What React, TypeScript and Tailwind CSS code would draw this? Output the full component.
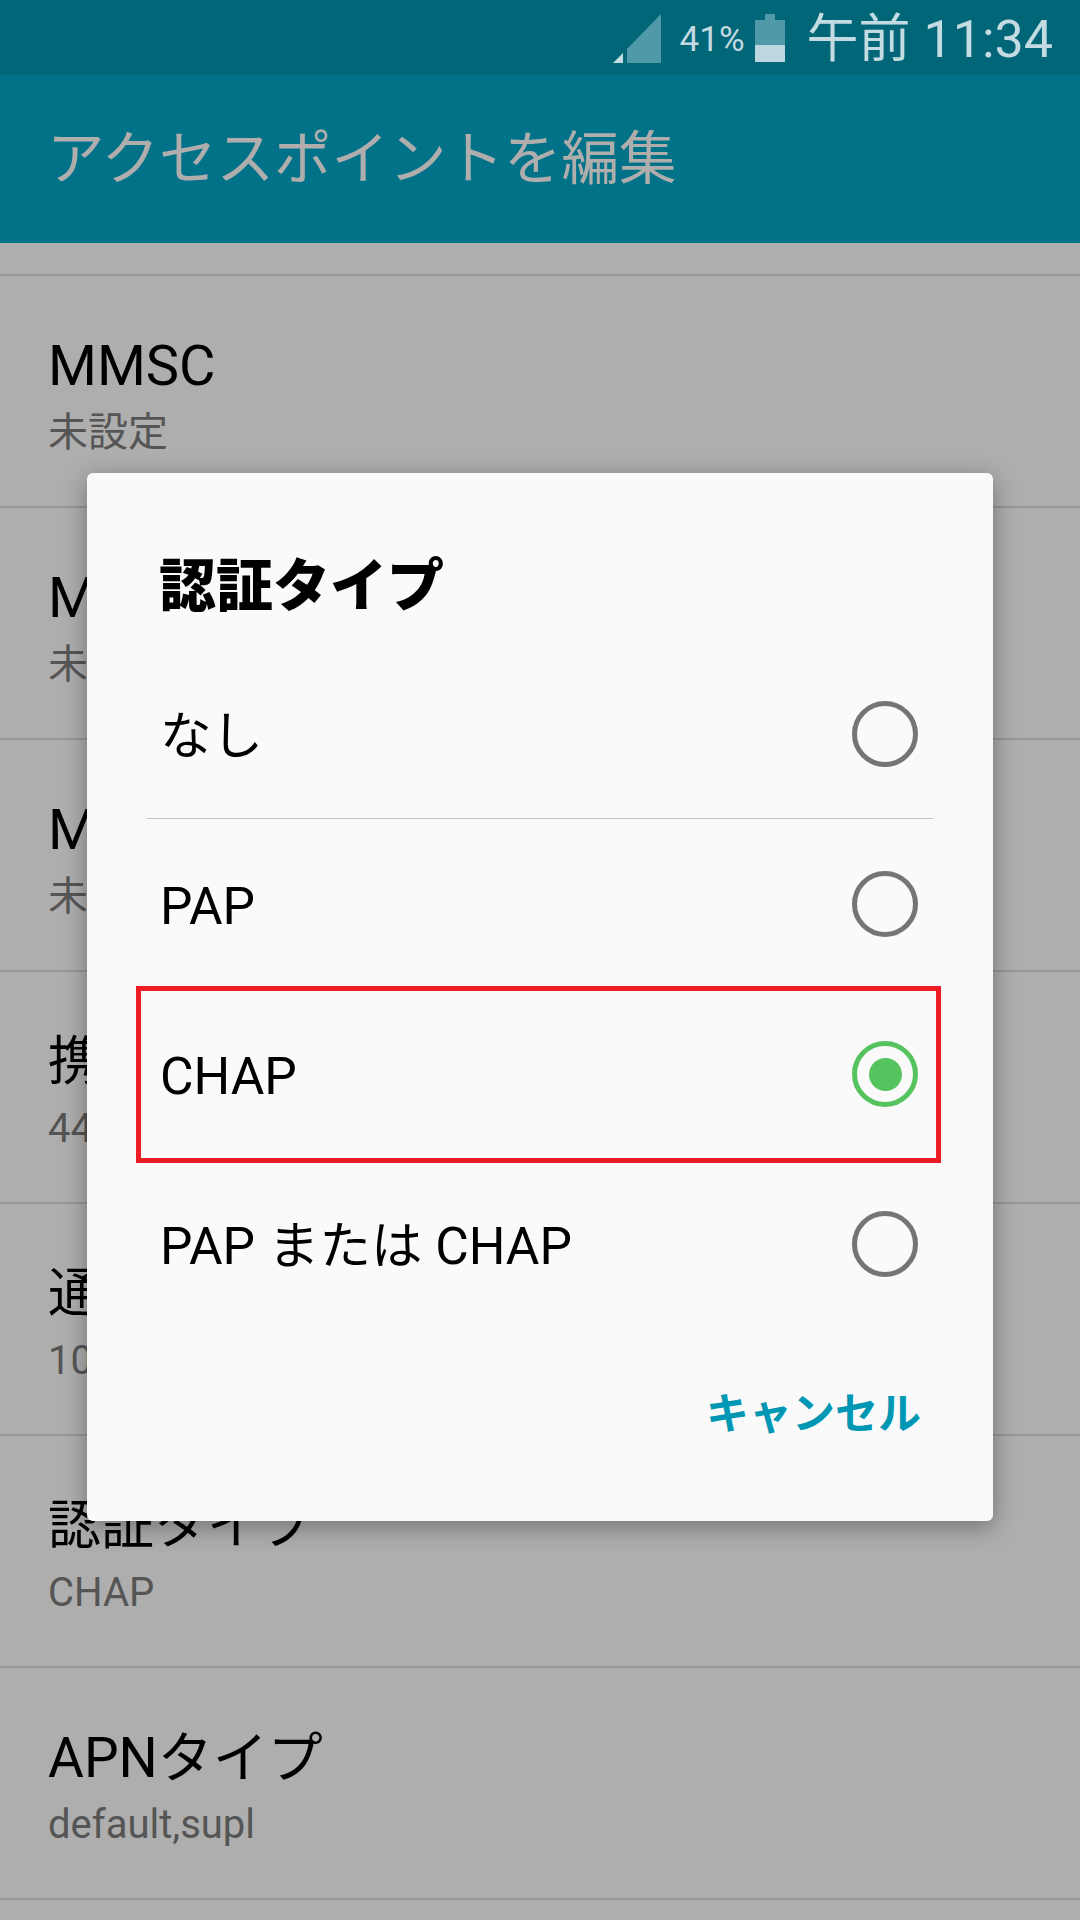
const FONT = "font-['Roboto','Noto_Sans_CJK_JP',sans-serif]";

const SETTINGS = [
  { title: "MMSC", value: "未設定", size: "text-[56px]" },
  { title: "MMSプロキシ", value: "未設定", size: "text-[56px]" },
  { title: "MMSポート", value: "未設定", size: "text-[56px]" },
  { title: "携帯国番号", value: "440", size: "text-[53px]" },
  { title: "通信事業者コード", value: "10", size: "text-[53px]" },
  { title: "認証タイプ", value: "CHAP", size: "text-[53px]" },
  { title: "APNタイプ", value: "default,supl", size: "text-[55px]" },
];

function SignalIcon() {
  return (
    <svg width="48" height="49" viewBox="0 0 48 49" className="block">
      <path d="M14 49V35L48 0V49Z" fill="#4f99a9" />
      <path d="M0 49L10 39V49Z" fill="#c3dbe1" />
    </svg>
  );
}

function BatteryIcon() {
  return (
    <svg width="30" height="48" viewBox="0 0 30 48" className="block">
      <path d="M10 0H20V6H30V31H0V6H10Z" fill="#4f99a9" />
      <rect x="0" y="31" width="30" height="17" fill="#bcd7dd" />
    </svg>
  );
}

function Radio({ checked }: { checked?: boolean }) {
  if (checked) {
    return (
      <span className="flex h-[66px] w-[66px] items-center justify-center rounded-full border-[5px] border-[#56c45e]">
        <span className="h-[33px] w-[33px] rounded-full bg-[#56c45e]" />
      </span>
    );
  }
  return <span className="h-[66px] w-[66px] rounded-full border-[5px] border-[#757575]" />;
}

function Option({ label, checked, divider }: { label: string; checked?: boolean; divider?: boolean }) {
  return (
    <div className="relative flex h-[170px] items-center justify-between pl-[73px] pr-[75px] text-[51.5px] text-black">
      <span className="mt-[6px]">{label}</span>
      <Radio checked={checked} />
      {divider && <div className="absolute bottom-0 left-[60px] right-[60px] h-[1.5px] bg-[#c4c4c4]" />}
      {checked && <div className="absolute left-0 right-0 top-[-3px] bottom-[-4px] ml-[49px] mr-[52px] border-[5px] border-[#ed1c24]" />}
    </div>
  );
}

export default function App() {
  return (
    <div className={`relative h-[1920px] w-[1080px] overflow-hidden bg-[#aeaeae] ${FONT}`}>
      <div className="flex h-[75px] items-center justify-end bg-[#006678] pr-[27px]">
        <div className="mt-[2px]">
          <SignalIcon />
        </div>
        <span className="ml-[19px] mt-[6px] text-[35px] text-[#c3dbe1]">41%</span>
        <div className="ml-[10px]">
          <BatteryIcon />
        </div>
        <span className="ml-[22px] mt-[5px] text-[52px] text-[#c3dbe1]">午前 11:34</span>
      </div>
      <div className="flex h-[168px] items-center bg-[#017288] pl-[47px] pt-[3px] text-[57.5px] text-[#b0adad]">
        アクセスポイントを編集
      </div>
      <div className="mt-[31px] border-t-2 border-[#969696]">
        {SETTINGS.map((s) => (
          <div key={s.title} className="flex h-[232px] flex-col border-b-2 border-[#969696] pl-[48px] pt-[56px]">
            <span className={`${s.size} leading-[68px] text-black`}>{s.title}</span>
            <span className="mt-[3px] text-[40px] leading-[60px] text-[#555555]">{s.value}</span>
          </div>
        ))}
      </div>
      <div className="absolute left-[87px] top-[473px] h-[1048px] w-[906px] rounded-[6px] bg-[#fafafa] shadow-[0_6px_24px_rgba(0,0,0,0.35)]">
        <div className="pl-[72px] pt-[74px] text-[57px] font-black leading-[80px] text-black">認証タイプ</div>
        <div className="mt-[22px]">
          <Option label="なし" divider />
          <Option label="PAP" />
          <Option label="CHAP" checked />
          <Option label="PAP または CHAP" />
        </div>
        <div className="mt-[55px] pr-[72px] text-right text-[43px] font-bold leading-[60px] text-[#0097b4]">キャンセル</div>
      </div>
    </div>
  );
}
